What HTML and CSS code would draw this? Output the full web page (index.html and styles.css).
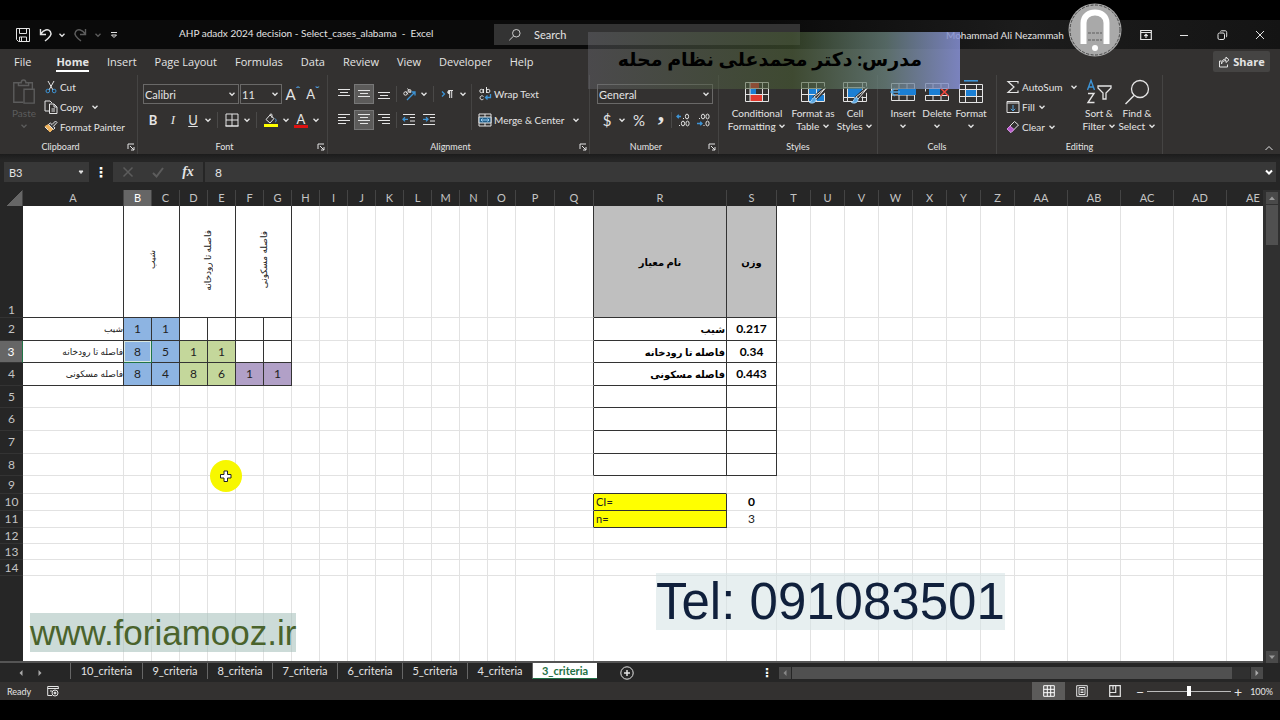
FILE: index.html
```
<!DOCTYPE html>
<html lang="en">
<head>
    <meta charset="utf-8">
    <title>AHP adadx 2024 decision - Excel</title>
    <link rel="stylesheet" href="styles.css">
</head>
<body>
    <svg class="defs" aria-hidden="true">
        <symbol id="chev" viewBox="0 0 8 8"><path d="M1.5 2.8 4 5.3 6.5 2.8" stroke-width="1.3"/></symbol>
        <symbol id="launcher" viewBox="0 0 8 8"><path d="M1 6V1h6M3 3l4 4M7 4v3H4"/></symbol>
        <symbol id="save" viewBox="0 0 16 16"><path d="M1.500 1.500h13v13h-11l-2-2zM4.500 1.500v5h7v-5M4.500 14.500v-4.500h7v4.500M6.500 10v4"/></symbol>
        <symbol id="undo" viewBox="0 0 16 16"><path d="M2.500 2v5.500H8M2.800 7.200C5.500 2.500 10 1.500 12.300 4.500c2 3-.3 5.500-5.300 9.500" stroke-width="1.400"/></symbol>
        <symbol id="custom" viewBox="0 0 8 8"><path d="M1 1.500h6M1.500 4 4 6.500 6.500 4z"/></symbol>
        <symbol id="lens" viewBox="0 0 16 16"><circle cx="9.500" cy="6" r="4.300"/><path d="M6.400 9.200 1.500 14"/></symbol>
        <symbol id="paste" viewBox="0 0 26 28"><path d="M8 4H2v21h10M17 4h5v7M7 7V4h3c0-4 5-4 5 0h3v3zM13 11h11v15H13z" stroke-width="1.500"/></symbol>
        <symbol id="cut" viewBox="0 0 14 14"><path d="M4 1l5 9M10 1 5 10"/><g stroke="#3d94d6"><circle cx="3.800" cy="11" r="1.800"/><circle cx="10.200" cy="11" r="1.800"/></g></symbol>
        <symbol id="copy" viewBox="0 0 14 14"><path d="M5 11H1V1h5l2 2M5.500 4h4.500l3 3v6.500H5.500zM10 4v3h3M7.500 9h3.500M7.500 11h3.500"/></symbol>
        <symbol id="painter" viewBox="0 0 14 14"><path d="M1 6.500 6 12l3-3-4.500-4.500z" fill="#f0b45f" stroke="#f0b45f"/><path d="M4.500 4.500 9.500 9.500 11 8 9.500 6.300 13 2.500 11.500 1 8 4.500 6.300 3zM1 7l3 3" fill="#444"/></symbol>
        <symbol id="borders" viewBox="0 0 14 14"><path d="M1 1h12M1 1v12M13 1v12M7 1v12M1 7h12"/><path d="M.5 13h13" stroke-width="1.500"/></symbol>
        <symbol id="bucket" viewBox="0 0 14 14"><path d="M6 2 2 6.500l4 3.500 4-4.500zM6 2c0-1.500 2-1.500 2 0v3"/><path d="M11 5.500c2 2 1 3.500 0 3.500"  stroke="#58a6e0"/><path d="M0 12.500h14" stroke="#ff0" stroke-width="3"/></symbol>
        <symbol id="al-top" viewBox="0 0 14 14"><path d="M1 2.500h12M3 5.500h8M1 8.500h12"/></symbol>
        <symbol id="al-mid" viewBox="0 0 14 14"><path d="M1 3.500h12M3 6.500h8M1 9.500h12"/></symbol>
        <symbol id="al-bot" viewBox="0 0 14 14"><path d="M1 5.500h12M3 8.500h8M1 11.500h12"/></symbol>
        <symbol id="al-left" viewBox="0 0 14 14"><path d="M1 1.500h12M1 4.500h8M1 7.500h12M1 10.500h8"/></symbol>
        <symbol id="al-center" viewBox="0 0 14 14"><path d="M1 1.500h12M3 4.500h8M1 7.500h12M3 10.500h8"/></symbol>
        <symbol id="al-right" viewBox="0 0 14 14"><path d="M1 1.500h12M5 4.500h8M1 7.500h12M5 10.500h8"/></symbol>
        <symbol id="outdent" viewBox="0 0 14 14"><path d="M1 1.500h12M8 4.500h5M8 8h5M1 11.500h12"/><path d="M6 6.300H1M3 4.200 1 6.300l2 2.100" stroke="#3d94d6" stroke-width="1.300"/></symbol>
        <symbol id="indent" viewBox="0 0 14 14"><path d="M1 1.500h12M8 4.500h5M8 8h5M1 11.500h12"/><path d="M1 6.300h5M4 4.200l2 2.100-2 2.100" stroke="#3d94d6" stroke-width="1.300"/></symbol>
        <symbol id="orient" viewBox="0 0 14 14"><circle cx="3.500" cy="6.500" r="1.700"/><path d="M4 4.500l2 2.800M5.500 1.500l3 4"/><circle cx="7.500" cy="4" r="1.500"/><path d="M5 13l8-8M9.500 5H13v3.500" stroke="#3d94d6" stroke-width="1.300"/></symbol>
        <symbol id="rtl" viewBox="0 0 14 14"><path d="M1 4.500l2.500 2.500L1 9.500" stroke="#3d94d6" stroke-width="1.300"/><path d="M12 3.500H7.500"/><path d="M8.500 3.500a1.700 1.700 0 0 0 0 3.400z" fill="#ddd"/><path d="M8.700 3.500V11M10.700 3.500V11"/></symbol>
        <symbol id="wrap" viewBox="0 0 14 14"><circle cx="3.500" cy="4" r="1.700"/><path d="M5.500 2v4M8.500 0v6M5.500 9.500C4 8 2 9 2 10.800S4 13.500 5.500 12"/><circle cx="10.200" cy="4" r="1.700"/><path d="M12.500 7v3.500H7.500M9.500 8.500l-2 2 2 2" stroke="#3d94d6" stroke-width="1.300"/></symbol>
        <symbol id="merge" viewBox="0 0 14 14"><path d="M1 1h12v12H1zM7 1v3M7 10v3"/><path d="M1 4h12v6H1z" fill="#1f5c87"/><path d="M3 7h8M4.500 5.500 3 7l1.500 1.500M9.500 5.500 11 7 9.500 8.500" stroke="#9fd0f5"/></symbol>
        <symbol id="dec-less" viewBox="0 0 14 14"><path d="M5 3.500H1M2.800 1.700 1 3.500l1.800 1.800" stroke="#3d94d6" stroke-width="1.300"/><ellipse cx="11" cy="3.500" rx="1.600" ry="2.400"/><ellipse cx="7" cy="10.500" rx="1.600" ry="2.400"/><ellipse cx="11.500" cy="10.500" rx="1.600" ry="2.400"/><path d="M3.500 12v1M7.500 5v1"/></symbol>
        <symbol id="dec-more" viewBox="0 0 14 14"><path d="M1 10.500h5M4.200 8.700 6 10.500l-1.800 1.800" stroke="#3d94d6" stroke-width="1.300"/><ellipse cx="7" cy="3.500" rx="1.600" ry="2.400"/><ellipse cx="11.500" cy="3.500" rx="1.600" ry="2.400"/><ellipse cx="11.500" cy="10.500" rx="1.600" ry="2.400"/><path d="M3.500 5v1M8 12v1"/></symbol>
        <symbol id="cond" viewBox="0 0 26 24"><path d="M6 3h9v6H6zM6 15h12v6H6z" fill="#e03a2f" stroke="none"/><path d="M6 9h6v6H6z" fill="#1b7fd4" stroke="none"/><path d="M1.500 2.500h23v19h-23zM1.500 8.500h23M1.500 14.500h23M6 2.500v19M18.500 2.500v19"/></symbol>
        <symbol id="fmt-table" viewBox="0 0 26 24"><path d="M8 9h16v12H8z" fill="#1b7fd4" stroke="none"/><path d="M1.500 21.500v-19h23v19zM1.500 8.500h23M1.500 14.500h23M8.500 2.500v19M16.500 2.500v19"/><path d="M26 8 14 19" stroke="#333130" stroke-width="5"/><path d="M25.500 8 16 19l-2-2z" fill="#333130"/><path d="M14.500 17.500c-3 0-2 4-5 5 3 1.500 7 0 6.500-4z" fill="#58a6e0" stroke="#9fd0f5"/></symbol>
        <symbol id="cell-style" viewBox="0 0 26 24"><path d="M5 8h16v9H5z" fill="#1b7fd4" stroke="none"/><path d="M1.500 21.500v-19h23v19zM1.500 7.500h23M1.500 17.500h23M5.500 2.500v19M20.500 2.500v19"/><path d="M26 8 14 19" stroke="#333130" stroke-width="5"/><path d="M25.500 8 16 19l-2-2z" fill="#333130"/><path d="M14.500 17.500c-3 0-2 4-5 5 3 1.500 7 0 6.500-4z" fill="#58a6e0" stroke="#9fd0f5"/></symbol>
        <symbol id="ins" viewBox="0 0 26 24"><path d="M1.500 3.500h23v17h-23zM1.500 9h23M1.500 15h23M9 3.500v17M17 3.500v17"/><path d="M8 9h18v6H8z" fill="#1b7fd4" stroke="none"/><path d="M10 12H1M5 8l-4 4 4 4" stroke="#58a6e0" stroke-width="1.400"/></symbol>
        <symbol id="del" viewBox="0 0 26 24"><path d="M1.500 3.500h23v5h-23zM1.500 15.500h23v5h-23zM9 3.500v5M17 3.500v5M9 15.500v5M17 15.500v5M1.500 8.500v3"/><path d="M5 9h11v6H5z" fill="#1b7fd4" stroke="none"/><path d="M16.500 8l8 8M24.500 8l-8 8" stroke="#f0483e" stroke-width="1.600"/></symbol>
        <symbol id="fmt" viewBox="0 0 26 24"><path d="M1.500 4.500h23v18h-23zM1.500 9.500h23M1.500 16.500h23M7.500 4.500v18M18.500 4.500v18"/><path d="M8 10h10v6H8z" fill="#1b7fd4" stroke="none"/><path d="M6 .800h14" stroke="#3d94d6" stroke-width="1.600"/></symbol>
        <symbol id="sum" viewBox="0 0 14 14"><path d="M12 3.500V1.500H2L8 7 2 12.500h10v-2" stroke-width="1.200"/></symbol>
        <symbol id="fill" viewBox="0 0 14 14"><path d="M1 1.500h12v11H1zM1 3h12"/><path d="M7 5v6M4.800 8.800 7 11l2.200-2.200" stroke="#58a6e0"/></symbol>
        <symbol id="clear" viewBox="0 0 14 14"><path d="M1 9 8.500 1.500l4 3.500L5 12.500z"/><path d="M1 9l3-3 4 3.500-3 3z" fill="#b757c9" stroke="#d18be0"/></symbol>
        <symbol id="sort" viewBox="0 0 26 26"><path d="M1.500 11 5 1.500 8.500 11M2.700 8h4.600" stroke="#3d94d6" stroke-width="1.400"/><path d="M2 14.500h6L2 23.500h6.500" stroke-width="1.400"/><path d="M12 7h13v2l-5 5v6h-3v-6l-5-5z" stroke-width="1.300"/></symbol>
        <symbol id="find" viewBox="0 0 26 26"><circle cx="16" cy="10" r="8.500" stroke-width="1.300"/><path d="M10 16.500 1.500 25" stroke-width="1.500"/></symbol>
        <symbol id="share" viewBox="0 0 12 12"><path d="M3.500 5H1.500v6h8V8.500M3.500 8C4 5.500 6 4.500 8 4.500V6.500L11 3.800 8 1v2C5 3 3.500 5 3.500 8z"/></symbol>
        <symbol id="ribbon-opt" viewBox="0 0 12 12"><path d="M.700 1.500h10.600v9H.700zM.700 3.500h10.600M6 9V5.500M4.300 7 6 5.300 7.700 7" stroke-width="1.200"/></symbol>
        <symbol id="restore" viewBox="0 0 12 12"><rect x="2" y="4" width="6.500" height="6.500" rx="1.500"/><path d="M4.500 2.500c0-.5.500-.7 1-.7H9c1.200 0 1.700.5 1.700 1.700V7c0 .7-.2 1-.7 1.200"/></symbol>
    </svg>

    <header class="title-bar">
        <div class="quick-access">
            <button class="w24" aria-label="Save"><svg class="i16"><use href="#save"/></svg></button>
            <button class="w22" aria-label="Undo"><svg class="i16"><use href="#undo"/></svg></button>
            <button class="w10" aria-label="Undo list"><svg class="i8"><use href="#chev"/></svg></button>
            <button class="w26 off flip" aria-label="Redo"><svg class="i16"><use href="#undo"/></svg></button>
            <button class="w10 off" aria-label="Redo list"><svg class="i8"><use href="#chev"/></svg></button>
            <button class="w22" aria-label="Customize"><svg class="i8"><use href="#custom"/></svg></button>
        </div>
        <div class="doc-title">AHP adadx 2024 decision - Select_cases_alabama&nbsp; -&nbsp; Excel</div>
        <label class="search">
            <svg class="i14"><use href="#lens"/></svg>
            <input type="text" placeholder="Search" aria-label="Search">
        </label>
        <div class="window-side">
            <span class="user">Mohammad Ali Nezammah</span>
            <button aria-label="Ribbon display options"><svg class="i12"><use href="#ribbon-opt"/></svg></button>
            <button aria-label="Minimize"><svg class="i12" viewBox="0 0 12 12"><path d="M2 6.500h8"/></svg></button>
            <button aria-label="Restore"><svg class="i12"><use href="#restore"/></svg></button>
            <button aria-label="Close"><svg class="i12" viewBox="0 0 12 12"><path d="M2 2l8 8M10 2l-8 8"/></svg></button>
        </div>
    </header>

    <nav class="tabs">
        <a href="#" class="file">File</a>
        <a href="#" class="current">Home</a>
        <a href="#">Insert</a>
        <a href="#">Page Layout</a>
        <a href="#">Formulas</a>
        <a href="#">Data</a>
        <a href="#">Review</a>
        <a href="#">View</a>
        <a href="#">Developer</a>
        <a href="#">Help</a>
        <button class="share"><svg class="i12"><use href="#share"/></svg>Share</button>
    </nav>

    <section class="ribbon">
        <div class="group clipboard">
            <div class="group-body">
                <button class="big off"><svg class="i26"><use href="#paste"/></svg><span>Paste</span><svg class="i8"><use href="#chev"/></svg></button>
                <div class="stack">
                    <button><svg class="i14"><use href="#cut"/></svg>Cut</button>
                    <button><svg class="i14"><use href="#copy"/></svg>Copy<svg class="i8 far"><use href="#chev"/></svg></button>
                    <button><svg class="i14"><use href="#painter"/></svg>Format Painter</button>
                </div>
            </div>
            <div class="group-name">Clipboard<svg class="i8"><use href="#launcher"/></svg></div>
        </div>

        <div class="group font">
            <div class="group-body lines">
                <div class="line">
                    <span class="combo font-name"><select aria-label="Font"><option>Calibri</option></select><svg class="i8"><use href="#chev"/></svg></span>
                    <span class="combo font-size"><select aria-label="Font size"><option>11</option></select><svg class="i8"><use href="#chev"/></svg></span>
                    <button class="w20 letter big-a">A<sup>ˆ</sup></button>
                    <button class="w20 letter">A<sup>ˇ</sup></button>
                </div>
                <div class="line">
                    <button class="w20 letter bold">B</button>
                    <button class="w20 letter italic">I</button>
                    <button class="w20 letter under">U</button>
                    <button class="w10" aria-label="Underline style"><svg class="i8"><use href="#chev"/></svg></button>
                    <i class="bar"></i>
                    <button class="w20" aria-label="Borders"><svg class="i14"><use href="#borders"/></svg></button>
                    <button class="w10" aria-label="Border style"><svg class="i8"><use href="#chev"/></svg></button>
                    <i class="bar"></i>
                    <button class="w20" aria-label="Fill colour"><svg class="i14"><use href="#bucket"/></svg></button>
                    <button class="w10" aria-label="Fill colours"><svg class="i8"><use href="#chev"/></svg></button>
                    <button class="letter red">A</button>
                    <button class="w10" aria-label="Font colours"><svg class="i8"><use href="#chev"/></svg></button>
                </div>
            </div>
            <div class="group-name">Font<svg class="i8"><use href="#launcher"/></svg></div>
        </div>

        <div class="group alignment">
            <div class="group-body lines">
                <div class="line">
                    <button class="w20" aria-label="Top align"><svg class="i14"><use href="#al-top"/></svg></button>
                    <button class="w20 on" aria-label="Middle align"><svg class="i14"><use href="#al-mid"/></svg></button>
                    <button class="w20" aria-label="Bottom align"><svg class="i14"><use href="#al-bot"/></svg></button>
                    <i class="bar tight"></i>
                    <button class="w20" aria-label="Orientation"><svg class="i14"><use href="#orient"/></svg></button>
                    <button class="w10" aria-label="Orientations"><svg class="i8"><use href="#chev"/></svg></button>
                    <i class="bar"></i>
                    <button class="w20" aria-label="Right to left"><svg class="i14"><use href="#rtl"/></svg></button>
                    <button class="w10" aria-label="Directions"><svg class="i8"><use href="#chev"/></svg></button>
                </div>
                <div class="line">
                    <button class="w20" aria-label="Align left"><svg class="i14"><use href="#al-left"/></svg></button>
                    <button class="w20 on" aria-label="Center"><svg class="i14"><use href="#al-center"/></svg></button>
                    <button class="w20" aria-label="Align right"><svg class="i14"><use href="#al-right"/></svg></button>
                    <i class="bar tight"></i>
                    <button class="w20" aria-label="Decrease indent"><svg class="i14"><use href="#outdent"/></svg></button>
                    <button class="w20" aria-label="Increase indent"><svg class="i14"><use href="#indent"/></svg></button>
                </div>
            </div>
            <div class="wrap-merge">
                <button><svg class="i14"><use href="#wrap"/></svg>Wrap Text</button>
                <button><svg class="i14"><use href="#merge"/></svg>Merge &amp; Center<svg class="i8 far"><use href="#chev"/></svg></button>
            </div>
            <div class="group-name">Alignment<svg class="i8"><use href="#launcher"/></svg></div>
        </div>

        <div class="group number">
            <div class="group-body lines">
                <div class="line">
                    <span class="combo number-format"><select aria-label="Number format"><option>General</option></select><svg class="i8"><use href="#chev"/></svg></span>
                </div>
                <div class="line">
                    <button class="w20 letter money">$</button>
                    <button class="w10" aria-label="Currencies"><svg class="i8"><use href="#chev"/></svg></button>
                    <button class="w24 letter money">%</button>
                    <button class="w20 letter comma">,</button>
                    <i class="bar tight"></i>
                    <button class="w20" aria-label="Increase decimal"><svg class="i14"><use href="#dec-less"/></svg></button>
                    <button class="w20" aria-label="Decrease decimal"><svg class="i14"><use href="#dec-more"/></svg></button>
                </div>
            </div>
            <div class="group-name">Number<svg class="i8"><use href="#launcher"/></svg></div>
        </div>

        <div class="group styles">
            <div class="group-body">
                <button class="big w68"><svg class="i26"><use href="#cond"/></svg><span>Conditional<br>Formatting <svg class="i8"><use href="#chev"/></svg></span></button>
                <button class="big w44"><svg class="i26"><use href="#fmt-table"/></svg><span>Format as<br>Table <svg class="i8"><use href="#chev"/></svg></span></button>
                <button class="big w40"><svg class="i26"><use href="#cell-style"/></svg><span>Cell<br>Styles <svg class="i8"><use href="#chev"/></svg></span></button>
            </div>
            <div class="group-name">Styles</div>
        </div>

        <div class="group cells">
            <div class="group-body">
                <button class="big w34"><svg class="i26"><use href="#ins"/></svg><span>Insert</span><svg class="i8"><use href="#chev"/></svg></button>
                <button class="big w34"><svg class="i26"><use href="#del"/></svg><span>Delete</span><svg class="i8"><use href="#chev"/></svg></button>
                <button class="big w34"><svg class="i26"><use href="#fmt"/></svg><span>Format</span><svg class="i8"><use href="#chev"/></svg></button>
            </div>
            <div class="group-name">Cells</div>
        </div>

        <div class="group editing">
            <div class="group-body">
                <div class="stack">
                    <button><svg class="i14"><use href="#sum"/></svg>AutoSum<svg class="i8 far"><use href="#chev"/></svg></button>
                    <button><svg class="i14"><use href="#fill"/></svg>Fill<svg class="i8 near"><use href="#chev"/></svg></button>
                    <button><svg class="i14"><use href="#clear"/></svg>Clear<svg class="i8 near"><use href="#chev"/></svg></button>
                </div>
                <button class="big w38"><svg class="i26"><use href="#sort"/></svg><span>Sort &amp;<br>Filter <svg class="i8"><use href="#chev"/></svg></span></button>
                <button class="big w38"><svg class="i26"><use href="#find"/></svg><span>Find &amp;<br>Select <svg class="i8"><use href="#chev"/></svg></span></button>
            </div>
            <div class="group-name">Editing</div>
        </div>

        <button class="collapse" aria-label="Collapse ribbon"><svg class="i8" viewBox="0 0 8 8"><path d="M.500 6 4 2.500 7.500 6"/></svg></button>
    </section>

    <section class="formula-bar">
        <label class="name-box"><input type="text" value="B3" aria-label="Name box"><svg class="i8" viewBox="0 0 8 8"><path d="M2 3h4L4 5.500z" fill="#ddd"/></svg></label>
        <span class="dots">⋮</span>
        <div class="formula-tools">
            <button class="off" aria-label="Cancel"><svg class="i12" viewBox="0 0 12 12"><path d="M1.500 1.500l9 9M10.500 1.500l-9 9" stroke-width="1.500"/></svg></button>
            <button class="off" aria-label="Enter"><svg class="i12" viewBox="0 0 12 12"><path d="M1 7l3.500 3.500L11 2" stroke-width="2"/></svg></button>
            <button class="fx">fx</button>
        </div>
        <label class="formula"><input type="text" value="8" aria-label="Formula"><svg class="i8" viewBox="0 0 8 8"><path d="M1 2.500 4 5.500 7 2.500" stroke="#fff" stroke-width="2"/></svg></label>
    </section>

    <main class="sheet">
        <div class="sheet-view"><table id="grid"></table></div>
        <div class="vscroll">
            <button aria-label="Scroll up"><svg class="i8" viewBox="0 0 8 8"><path d="M1 6h6L4 2.500z" fill="#999" stroke="none"/></svg></button>
            <div class="vthumb"></div>
            <button aria-label="Scroll down"><svg class="i8" viewBox="0 0 8 8"><path d="M1 2.500h6L4 6z" fill="#999" stroke="none"/></svg></button>
        </div>
        <div class="pointer"><svg class="i12" viewBox="0 0 12 12"><path d="M4 1h3.500v3.500H11V8H7.500v3.500H4V8H.500V4.500H4z" fill="#fff" stroke="#222"/></svg></div>
        <div class="site-mark">www.foriamooz.ir</div>
        <div class="phone-mark">Tel: 091083501</div>
    </main>

    <footer>
        <div class="sheet-tabs">
            <div class="tab-arrows">
                <button aria-label="Previous sheet"><svg class="i8" viewBox="0 0 8 8"><path d="M5.500 1v6L2.500 4z" fill="#aaa" stroke="none"/></svg></button>
                <button aria-label="Next sheet"><svg class="i8" viewBox="0 0 8 8"><path d="M2.500 1v6l3-3z" fill="#aaa" stroke="none"/></svg></button>
            </div>
            <a href="#" class="wide">10_criteria</a>
            <a href="#">9_criteria</a>
            <a href="#">8_criteria</a>
            <a href="#">7_criteria</a>
            <a href="#">6_criteria</a>
            <a href="#">5_criteria</a>
            <a href="#">4_criteria</a>
            <a href="#" class="current">3_criteria</a>
            <button class="new-sheet" aria-label="New sheet"><svg class="i14" viewBox="0 0 14 14"><circle cx="7" cy="7" r="6.200"/><path d="M7 4v6M4 7h6" stroke-width="1.500"/></svg></button>
            <div class="hscroll">
                <span class="dots">⋮</span>
                <button aria-label="Scroll left"><svg class="i8" viewBox="0 0 8 8"><path d="M5.500 1v6L2.500 4z" fill="#888" stroke="none"/></svg></button>
                <div class="htrack"><div class="hthumb"></div></div>
                <button aria-label="Scroll right"><svg class="i8" viewBox="0 0 8 8"><path d="M2.500 1v6l3-3z" fill="#aaa" stroke="none"/></svg></button>
            </div>
        </div>
        <div class="status">
            <span>Ready</span>
            <svg class="i12 macro" viewBox="0 0 12 12"><path d="M5 10.500H.700V1.500h10.600V4M.700 3.500h10.600M3 6h2"/><circle cx="8" cy="8" r="3"/><circle cx="8" cy="8" r="1" fill="#ddd"/></svg>
            <div class="views">
                <button class="on" aria-label="Normal"><svg class="i12" viewBox="0 0 12 12"><path d="M.700.700h10.600v10.600H.700zM4.300.700v10.600M7.700.700v10.600M.700 4.300h10.600M.700 7.700h10.600" stroke="#fff"/></svg></button>
                <button aria-label="Page layout"><svg class="i12" viewBox="0 0 12 12"><path d="M.700.700h10.600v10.600H.700zM3 2.500h6v7H3zM4.500 4.500h3M4.500 6h3M4.500 7.500h3"/></svg></button>
                <button aria-label="Page break preview"><svg class="i12" viewBox="0 0 12 12"><path d="M.700.700h10.600v10.600H.700zM.700 7.500h6V.700M4 .700v4" stroke-width="1.200"/></svg></button>
            </div>
            <div class="zoom">
                <button aria-label="Zoom out">−</button>
                <input type="range" min="0" max="100" value="50" aria-label="Zoom">
                <button aria-label="Zoom in">+</button>
            </div>
            <span class="percent">100%</span>
        </div>
    </footer>

    <div class="teacher" lang="fa" dir="rtl">مدرس: دکتر محمدعلی نظام محله</div>
    <svg class="logo" viewBox="0 0 54 54">
        <circle cx="27" cy="27" r="26.500" fill="#a9a9a9" stroke="none"/>
        <circle cx="27" cy="27" r="25" stroke="#444" stroke-dasharray="3 1.500"/>
        <path d="M15.500 41V20c0-14 23-14 23 0v21" stroke="#fff" stroke-width="6"/>
        <path d="M20 30h14M20 37h14" stroke="#777" stroke-width="1.500" stroke-dasharray="3 1"/>
        <circle cx="27" cy="45" r="3" fill="#fff" stroke="none"/>
    </svg>

    <script>
        let widths = {A: 101, P: 39, Q: 39, R: 133, S: 50};
        let columns = [];
        for (let i = 0; i < 31; i++) {
            let letter = String.fromCharCode(65 + i % 26);
            let name = i < 26 ? letter : 'A' + letter;
            columns.push({name: name, width: widths[name] || (i < 16 ? 28 : i < 26 ? 34 : 53)});
        }
        let heights = [112, 23, 22, 23, 22, 23, 23, 22, 18, 17, 17, 16, 16, 16];

        let slope = 'شیب', river = 'فاصله تا رودخانه', town = 'فاصله مسکونی';
        let cells = {
            B1: [slope, 'up'], D1: [river, 'up'], F1: [town, 'up'],
            A2: [slope, 'fa'], A3: [river, 'fa'], A4: [town, 'fa'],
            B2: [1, 'blue'], C2: [1, 'blue'],
            B3: [8, 'blue active'], C3: [5, 'blue'], D3: [1, 'green'], E3: [1, 'green'],
            B4: [8, 'blue'], C4: [4, 'blue'], D4: [8, 'green'], E4: [6, 'green'], F4: [1, 'purple'], G4: [1, 'purple'],
            R1: ['نام معیار', 'gray'], S1: ['وزن', 'gray'],
            R2: [slope, 'fa strong'], R3: [river, 'fa strong'], R4: [town, 'fa strong'],
            S2: ['0.217', 'weight'], S3: ['0.34', 'weight'], S4: ['0.443', 'weight'],
            R10: ['CI=', 'yellow'], R11: ['n=', 'yellow'],
            S10: ['0', 'weight'], S11: ['3', 'plain']
        };

        function borders(col, row) {
            if (col <= 'G' && col.length === 1 && row <= 4) return ' box';
            if ((col === 'R' || col === 'S') && row <= 8) return ' box';
            if (col === 'R' && (row === 10 || row === 11)) return ' box';
            if (col === 'R' && row === 9) return ' line-b';
            if (col === 'Q' && row <= 11 && row !== 9) return ' line-r';
            return '';
        }

        let html = '<colgroup><col class="row-col">';
        for (let c of columns) {
            html += '<col style="width: ' + c.width + 'px">';
        }
        html += '</colgroup><thead><tr><th class="corner"></th>';
        for (let c of columns) {
            html += '<th' + (c.name === 'B' ? ' class="picked"' : '') + '>' + c.name + '</th>';
        }
        html += '</tr></thead><tbody>';
        heights.forEach(function(height, i) {
            let row = i + 1;
            html += '<tr style="height: ' + height + 'px"><th' + (row === 3 ? ' class="picked"' : '') + '>' + row + '</th>';
            for (let c of columns) {
                if (row === 1 && 'CEG'.includes(c.name)) continue;
                let cell = cells[c.name + row] || ['', ''];
                let span = cell[1] === 'up' ? ' colspan="2"' : '';
                html += '<td' + span + ' class="' + cell[1] + borders(c.name, row) + '"><span>' + cell[0] + '</span></td>';
            }
            html += '</tr>';
        });
        html += '<tr class="rest"><th></th>' + '<td></td>'.repeat(columns.length) + '</tr></tbody>';
        document.getElementById('grid').innerHTML = html;
    </script>
</body>
</html>
```
FILE: styles.css
```
* {
    box-sizing: border-box;
}

body {
    margin: 0;
    padding: 20px 0;
    height: 100vh;
    display: flex;
    flex-direction: column;
    position: relative;
    overflow: hidden;
    background: #000;
    color: #e4e4e4;
    font-family: Lato, "DejaVu Sans", sans-serif;
    font-size: 10px;
}

button, input, select {
    font: inherit;
    color: inherit;
    background: none;
    border: 0;
    padding: 0;
    margin: 0;
    outline: none;
}

button {
    display: flex;
    align-items: center;
    justify-content: center;
    white-space: nowrap;
}

a {
    color: inherit;
    text-decoration: none;
}

svg {
    flex: none;
    fill: none;
    stroke: currentColor;
}

.defs {
    position: absolute;
    width: 0;
    height: 0;
}

.i8 { width: 8px; height: 8px; }
.i12 { width: 12px; height: 12px; }
.i14 { width: 14px; height: 14px; }
.i16 { width: 16px; height: 16px; }
.i26 { width: 26px; height: 26px; }

.w10 { width: 10px; }
.w20 { width: 20px; }
.w22 { width: 22px; }
.w24 { width: 24px; }
.w26 { width: 26px; }
.w34 { width: 34px; }
.w38 { width: 38px; }
.w40 { width: 40px; }
.w44 { width: 44px; }
.w68 { width: 68px; }

.off {
    color: #5c5c5c;
}

.flip svg {
    transform: scaleX(-1);
}

/* title bar */
.title-bar {
    flex: none;
    height: 29px;
    display: flex;
    align-items: center;
    background: linear-gradient(90deg, #0a0a0a 60%, #1c1c1c 80%, #141414);
}

.quick-access {
    display: flex;
    width: 179px;
    padding-left: 11px;
}

.doc-title {
    width: 315px;
    padding-bottom: 3px;
    white-space: nowrap;
}

.search {
    flex: 0 1 306px;
    height: 21px;
    display: flex;
    align-items: center;
    gap: 12px;
    padding-left: 14px;
    background: #333;
    font-size: 11px;
}

.search input {
    width: 200px;
}

.search input::placeholder {
    color: #e4e4e4;
}

.window-side {
    margin-left: auto;
    display: flex;
    align-items: center;
    padding-right: 1px;
}

.window-side button {
    width: 38px;
    height: 29px;
}

.user {
    width: 181px;
}

/* ribbon tabs */
.tabs {
    flex: none;
    height: 26px;
    display: flex;
    align-items: flex-start;
    gap: 18px;
    padding: 0 10px 0 14px;
    background: #333130;
    font-family: "Open Sans", sans-serif;
    font-size: 11px;
}

.tabs a {
    height: 23px;
    line-height: 25px;
}

.tabs .file {
    margin-right: 7px;
}

.tabs .current {
    font-weight: bold;
    border-bottom: 2px solid #fff;
}

.share {
    margin: 2px 0 0 auto;
    width: 57px;
    height: 21px;
    gap: 3px;
    background: #454443;
    border-radius: 2px;
    font-weight: bold;
}

/* ribbon */
.ribbon {
    flex: none;
    height: 79px;
    display: flex;
    background: #333130;
}

.group {
    flex: none;
    display: flex;
    flex-direction: column;
    position: relative;
    border-right: 1px solid #454443;
}

.group-body {
    height: 65px;
    display: flex;
    align-items: flex-start;
}

.group-name {
    position: relative;
    text-align: center;
    font-size: 9px;
    line-height: 14px;
    padding-right: 16px;
}

.group-name svg {
    position: absolute;
    right: 2px;
    top: 3px;
}

.clipboard { width: 138px; }
.font { width: 190px; }
.alignment { width: 262px; }
.number { width: 129px; }
.styles { width: 159px; }
.cells { width: 119px; }
.editing { width: 166px; }

.styles .group-name,
.cells .group-name,
.editing .group-name {
    padding-right: 0;
}

.clipboard .group-body {
    padding-left: 11px;
}

.styles .group-body {
    padding-left: 4px;
}

.cells .group-body {
    padding-left: 8px;
}

.editing .group-body {
    padding-left: 9px;
}

.editing .stack {
    width: 74px;
}

.big {
    flex-direction: column;
    justify-content: flex-start;
    padding-top: 4px;
    line-height: 13px;
}

.big .i26 {
    margin-bottom: 2px;
}

.big > .i8 {
    margin-top: 2px;
}

.stack {
    padding-top: 2px;
}

.stack button {
    height: 20px;
    gap: 2px;
}

.clipboard .stack {
    padding-left: 7px;
}

.far {
    margin-left: 6px;
}

.near {
    margin-left: 1px;
}

.lines {
    flex-direction: column;
    padding-top: 9px;
    gap: 6px;
}

.line {
    display: flex;
    align-items: center;
    height: 20px;
}

.font .lines {
    padding-left: 5px;
}

.alignment .lines {
    padding-left: 6px;
}

.number .lines {
    padding-left: 7px;
}

.combo {
    display: flex;
    align-items: center;
    height: 20px;
    padding: 0 2px 0 1px;
    border: 1px solid #6a6968;
    font-size: 11px;
}

.combo select {
    appearance: none;
    flex: 1;
    min-width: 0;
}

.font-name { width: 96px; }
.font-size { width: 42px; margin: 0 1px; }
.number-format { width: 116px; }

.letter {
    height: 20px;
    font-size: 13px;
}

.letter sup {
    align-self: flex-start;
    color: #58a6e0;
    font-size: 12px;
    font-weight: bold;
    line-height: 14px;
}

.big-a { font-size: 15px; }
.bold { font-weight: bold; }
.italic { font-family: "Liberation Serif", serif; font-style: italic; }
.under { text-decoration: underline; }
.money { font-size: 15px; }
.comma { font: bold 26px "Liberation Serif", serif; line-height: 4px; padding-bottom: 14px; }

.red {
    width: 14px;
    height: 15px;
    margin: 0 3px;
    border-bottom: 3px solid #d11;
}

.bar {
    width: 1px;
    height: 16px;
    margin: 0 4px;
    background: #4a4948;
}

.tight {
    margin: 0 2px;
}

.number .tight {
    margin: 0 1px 0 0;
}

.on {
    background: #5c5b5a;
}

.alignment .line .on {
    height: 20px;
    border: 1px solid #777;
}

.wrap-merge {
    position: absolute;
    left: 143px;
    top: 9px;
    display: flex;
    flex-direction: column;
    align-items: flex-start;
    gap: 6px;
    padding-left: 6px;
    border-left: 1px solid #454443;
}

.wrap-merge button {
    height: 20px;
    gap: 2px;
}

.collapse {
    margin: auto 7px 2px auto;
}

/* formula bar */
.formula-bar {
    flex: none;
    height: 36px;
    display: flex;
    align-items: center;
    padding: 0 4px;
    background: linear-gradient(#1c1c1c, #262626 6px);
    font-size: 11px;
}

.formula-bar label,
.formula-tools {
    display: flex;
    align-items: center;
    height: 20px;
    background: #383838;
}

.name-box {
    width: 85px;
    padding: 0 4px 0 5px;
}

.name-box input {
    flex: 1;
    min-width: 0;
}

.dots {
    width: 24px;
    text-align: center;
    font: bold 14px "DejaVu Sans", sans-serif;
    color: #fff;
}

.formula-tools button {
    width: 30px;
    height: 20px;
}

.formula-tools .fx {
    font: italic bold 14px "Liberation Serif", serif;
}

.formula-bar .formula {
    flex: 1;
    margin-left: 2px;
    padding: 0 3px 0 10px;
    font-size: 12px;
}

.formula input {
    flex: 1;
}

/* sheet */
.sheet {
    flex: 1;
    min-height: 0;
    display: flex;
    position: relative;
    background: #262626;
}

.sheet-view {
    flex: 1;
    min-width: 0;
    overflow: hidden;
    background: #fff;
    border-bottom: 2px solid #555;
}

table {
    table-layout: fixed;
    width: 1px;
    border-collapse: separate;
    border-spacing: 0;
    color: #222;
    font-size: 12px;
}

.row-col {
    width: 23px;
}

th {
    padding: 0;
    height: 16px;
    line-height: 14px;
    background: #262626;
    border-right: 1px solid #444;
    color: #c4c4c4;
    font-weight: normal;
    font-size: 11px;
}

tbody th {
    vertical-align: middle;
    border-right: 0;
    border-bottom: 1px solid #333;
    font-size: 12px;
}

tbody tr:first-child th {
    vertical-align: bottom;
}

.corner {
    background: linear-gradient(135deg, #262626 60%, #666 60%);
}

th.picked {
    background: #666;
    color: #fff;
}

tbody th.picked {
    border-right: 1px solid #217346;
}

td {
    padding: 0;
    height: 15px;
    line-height: 14px;
    text-align: center;
    white-space: nowrap;
    overflow: hidden;
    border-right: 1px solid #e2e2e2;
    border-bottom: 1px solid #e2e2e2;
}

.box {
    border-color: #333;
}

.line-r {
    border-right-color: #333;
}

.line-b {
    border-bottom-color: #333;
}

.up span {
    display: inline-block;
    writing-mode: vertical-rl;
    transform: rotate(180deg);
    direction: rtl;
    font-size: 9px;
}

.fa {
    direction: rtl;
    text-align: right;
    font-size: 9px;
}

.strong {
    padding-right: 1px;
    color: #000;
    font-size: 10px;
    font-weight: bold;
}

.blue { background: #8db4e2; }
.green { background: #c4d79b; }
.purple { background: #b1a0c7; }

.active {
    border-color: #217346;
    box-shadow: inset 0 0 0 1px #d8e8e0;
}

.gray {
    background: #bfbfbf;
    color: #000;
    font-size: 10px;
    font-weight: bold;
}

.weight {
    color: #000;
    font-size: 12px;
    font-weight: bold;
}

.yellow {
    background: #ff0;
    text-align: left;
    padding-left: 2px;
    font-size: 11px;
}

.rest {
    height: 900px;
}

.rest th {
    border-bottom: 0;
}

.vscroll {
    flex: none;
    width: 17px;
    display: flex;
    flex-direction: column;
    align-items: center;
    padding: 2px 0 0 1px;
    background: #303030;
}

.vscroll button {
    width: 12px;
    height: 12px;
    background: #4a4a4a;
}

.vthumb {
    flex: 0 0 40px;
    width: 12px;
    margin: 1px 0 auto;
    background: #505050;
}

.pointer {
    position: absolute;
    left: 210px;
    top: 270px;
    width: 32px;
    height: 32px;
    display: flex;
    align-items: center;
    justify-content: center;
    border-radius: 50%;
    background: #f7f700;
}

.site-mark {
    position: absolute;
    left: 30px;
    bottom: 11px;
    line-height: 39px;
    background: rgba(170, 195, 190, .6);
    color: #4a632c;
    font-family: "Liberation Sans", sans-serif;
    font-size: 35px;
}

.phone-mark {
    position: absolute;
    left: 656px;
    bottom: 33px;
    line-height: 57px;
    background: rgba(215, 228, 230, .6);
    color: #10203c;
    font-family: "Liberation Sans", sans-serif;
    font-size: 51px;
}

/* bottom bars */
.sheet-tabs {
    height: 19px;
    display: flex;
    align-items: stretch;
    background: #262626;
    font-size: 11px;
}

.tab-arrows {
    display: flex;
    width: 70px;
    padding-left: 11px;
}

.tab-arrows button {
    width: 19px;
}

.sheet-tabs a {
    width: 65px;
    height: 16px;
    line-height: 15px;
    text-align: center;
    border-left: 1px solid #666;
}

.sheet-tabs .wide {
    width: 72px;
}

.sheet-tabs .current {
    background: #fff;
    color: #1e7145;
    font-weight: bold;
    border-bottom: 1px solid #1e7145;
}

.new-sheet {
    margin-left: 23px;
}

.hscroll {
    flex: 0 1 525px;
    display: flex;
    align-items: center;
    margin-left: auto;
    padding-right: 17px;
}

.hscroll .dots {
    font-size: 12px;
}

.hscroll button {
    width: 12px;
    height: 12px;
    background: #4a4a4a;
}

.htrack {
    flex: 1;
    margin: 0 1px;
    height: 12px;
    background: #303030;
}

.hthumb {
    width: 96%;
    height: 12px;
    background: #505050;
}

.status {
    height: 18px;
    display: flex;
    align-items: center;
    padding: 0 7px;
    background: #333130;
    font-size: 9px;
}

.macro {
    margin-left: 16px;
}

.views {
    display: flex;
    margin-left: auto;
}

.views button {
    width: 33px;
    height: 18px;
}

.zoom {
    display: flex;
    align-items: center;
    margin-left: 2px;
    font-size: 14px;
}

.zoom button {
    width: 14px;
}

.zoom input {
    appearance: none;
    width: 84px;
    height: 12px;
}

.zoom input::-webkit-slider-runnable-track {
    height: 1px;
    background: #bbb;
}

.zoom input::-webkit-slider-thumb {
    appearance: none;
    width: 4px;
    height: 10px;
    margin-top: -5px;
    background: #fff;
}

.percent {
    width: 28px;
    text-align: right;
}

/* video overlays */
.teacher {
    position: absolute;
    left: 588px;
    top: 32px;
    width: 372px;
    height: 57px;
    padding-right: 38px;
    line-height: 54px;
    background: linear-gradient(90deg, rgba(110, 110, 118, .4), rgba(70, 90, 50, .6) 55%, rgba(105, 130, 125, .75) 80%, rgba(135, 145, 215, .85));
    color: #000;
    font-size: 19px;
    font-weight: bold;
    white-space: nowrap;
}

.logo {
    position: absolute;
    left: 1068px;
    top: 3px;
    width: 54px;
    height: 54px;
}
```
